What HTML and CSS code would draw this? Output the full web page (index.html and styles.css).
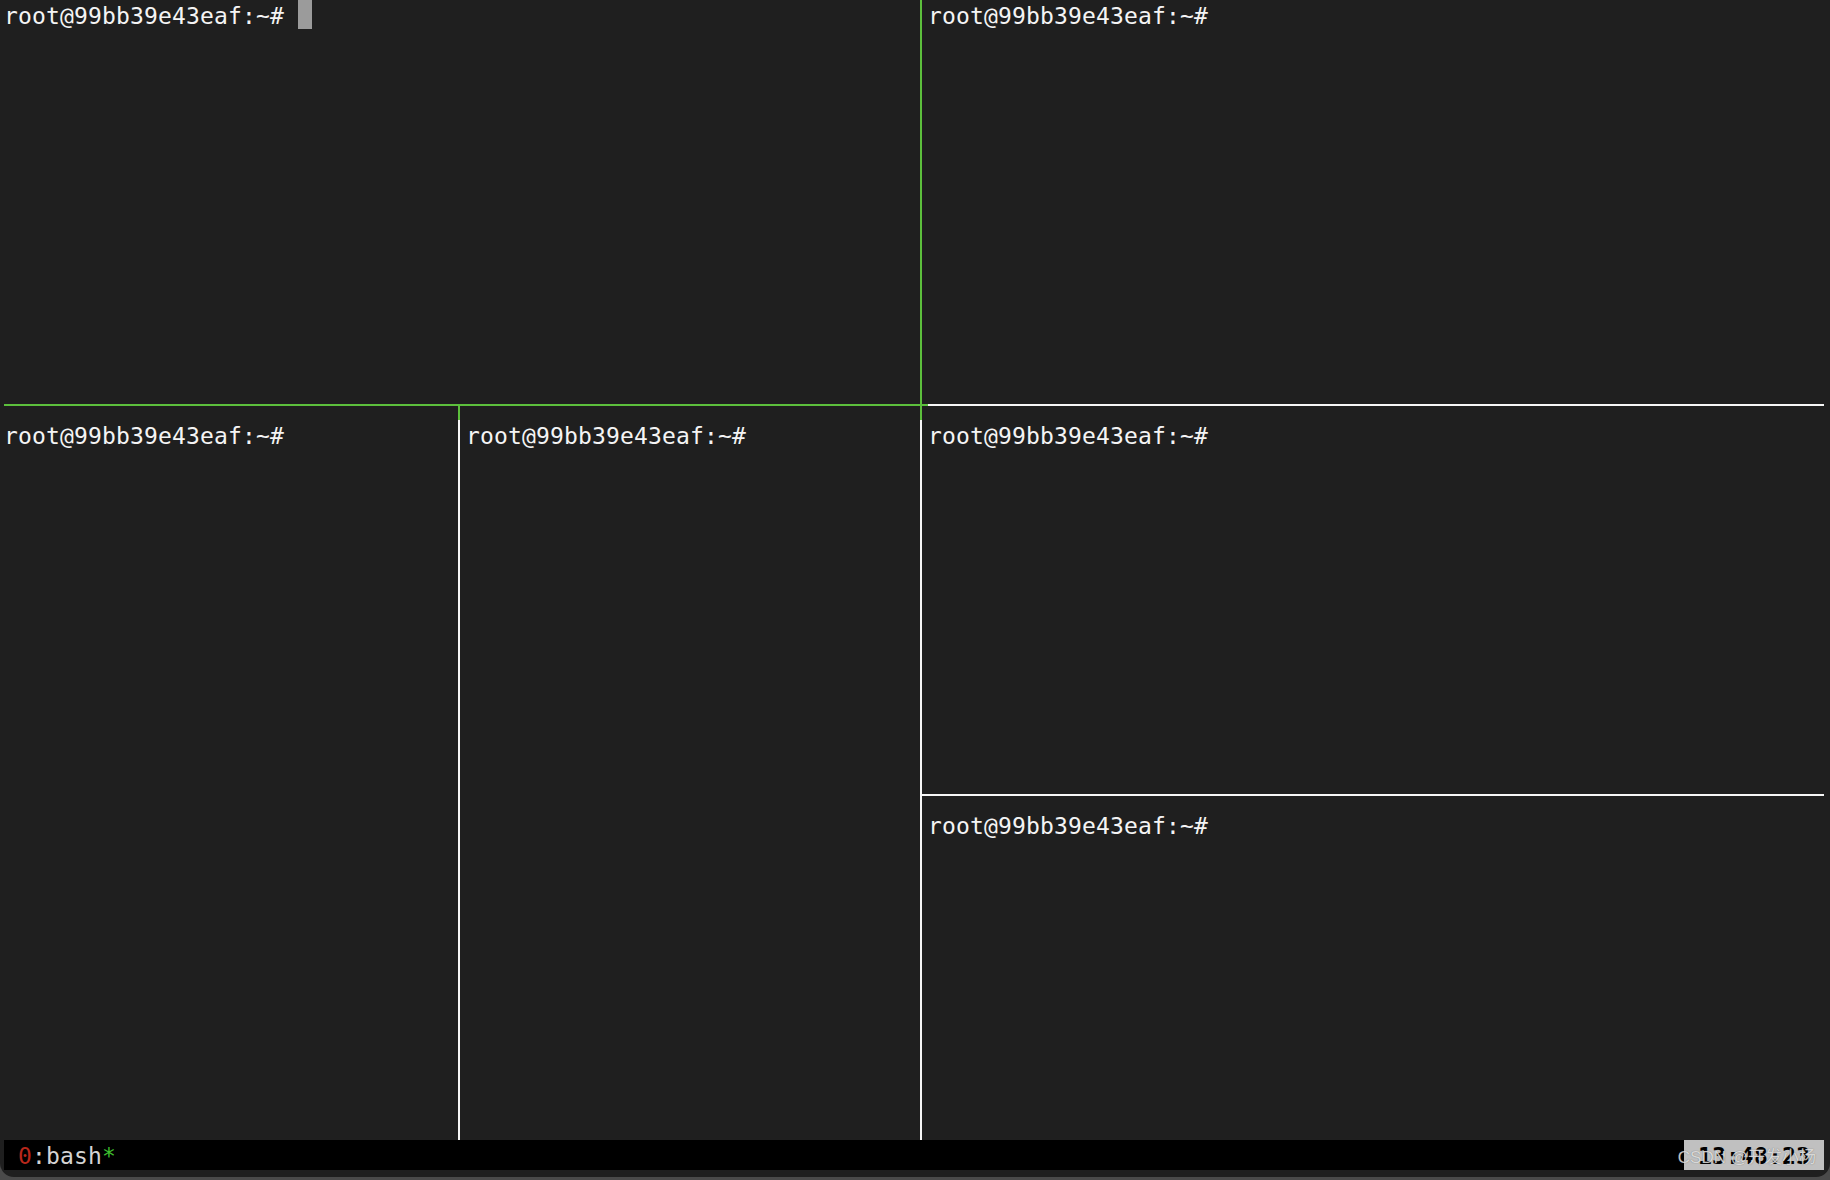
FILE: index.html
```html
<!DOCTYPE html>
<html>
<head>
<meta charset="utf-8">
<link rel="stylesheet" href="styles.css">
</head>
<body>
<div class="window">
  <div class="term">
    <div class="panes">
      <div class="pane p-tl"><span class="prompt">root@99bb39e43eaf:~# </span><span class="cursor"></span></div>
      <div class="bd v green d-r1"></div>
      <div class="pane p-tr"><span class="prompt">root@99bb39e43eaf:~#</span></div>

      <div class="bd h green a-r2"></div>
      <div class="bd tee-down green b-r2"></div>
      <div class="bd h green c-r2"></div>
      <div class="bd cross green d-r2"></div>
      <div class="bd h white e-r2"></div>

      <div class="pane p-bl"><span class="prompt">root@99bb39e43eaf:~#</span></div>
      <div class="bd v white b-r3"></div>
      <div class="pane p-bm"><span class="prompt">root@99bb39e43eaf:~#</span></div>
      <div class="bd v white d-r3"></div>
      <div class="pane p-rm"><span class="prompt">root@99bb39e43eaf:~#</span></div>
      <div class="bd tee-right white d-r4"></div>
      <div class="bd h white e-r4"></div>
      <div class="bd v white d-r5"></div>
      <div class="pane p-rb"><span class="prompt">root@99bb39e43eaf:~#</span></div>
    </div>
    <div class="status">
      <div class="status-left"> <span class="idx">0</span>:bash<span class="flag">*</span></div>
      <div class="status-right">13:48:23</div>
      <div class="watermark">CSDN @开发小杨</div>
    </div>
  </div>
</div>
</body>
</html>
```

FILE: styles.css
```css
html, body {
  margin: 0;
  padding: 0;
}
body {
  background: #4a4a4a;
  width: 1830px;
  height: 1180px;
  overflow: hidden;
}
.window {
  width: 1830px;
  height: 1177px;
  background: #1f1f1f;
  border-radius: 0 0 14px 14px;
}
.term {
  padding-left: 4px;
  width: 1820px;
  font-family: "DejaVu Sans Mono", "Liberation Mono", monospace;
  font-size: 23px;
  letter-spacing: 0.15px;
  line-height: 30px;
  color: #f4f4f4;
}
.panes {
  display: grid;
  grid-template-columns: 448px 14px 448px 14px 896px;
  grid-template-rows: 390px 30px 360px 30px 330px;
  width: 1820px;
  height: 1140px;
}
.pane {
  white-space: pre;
  overflow: hidden;
}
.prompt {
  display: inline-block;
  vertical-align: top;
  padding-top: 1px;
  height: 29px;
}
.cursor {
  display: inline-block;
  vertical-align: top;
  width: 14px;
  height: 29px;
  background: #9b9b9b;
}
.p-tl { grid-column: 1 / 4; grid-row: 1; }
.p-tr { grid-column: 5; grid-row: 1; }
.p-bl { grid-column: 1; grid-row: 3 / 6; }
.p-bm { grid-column: 3; grid-row: 3 / 6; }
.p-rm { grid-column: 5; grid-row: 3; }
.p-rb { grid-column: 5; grid-row: 5; }

.d-r1 { grid-column: 4; grid-row: 1; }
.a-r2 { grid-column: 1; grid-row: 2; }
.b-r2 { grid-column: 2; grid-row: 2; }
.c-r2 { grid-column: 3; grid-row: 2; }
.d-r2 { grid-column: 4; grid-row: 2; }
.e-r2 { grid-column: 5; grid-row: 2; }
.b-r3 { grid-column: 2; grid-row: 3 / 6; }
.d-r3 { grid-column: 4; grid-row: 3; }
.d-r4 { grid-column: 4; grid-row: 4; }
.e-r4 { grid-column: 5; grid-row: 4; }
.d-r5 { grid-column: 4; grid-row: 5; }

.bd { --c: #ffffff; }
.bd.green { --c: #5cbf3c; }
.bd.white { --c: #f6f6f6; }

.bd.v {
  background: linear-gradient(var(--c), var(--c)) no-repeat 6px 0 / 2px 100%;
}
.bd.h {
  background: linear-gradient(var(--c), var(--c)) no-repeat 0 14px / 100% 2px;
}
.bd.cross {
  background:
    linear-gradient(var(--c), var(--c)) no-repeat 6px 0 / 2px 100%,
    linear-gradient(var(--c), var(--c)) no-repeat 0 14px / 100% 2px;
}
.bd.tee-down {
  background:
    linear-gradient(var(--c), var(--c)) no-repeat 6px 14px / 2px 16px,
    linear-gradient(var(--c), var(--c)) no-repeat 0 14px / 100% 2px;
}
.bd.tee-right {
  background:
    linear-gradient(var(--c), var(--c)) no-repeat 6px 0 / 2px 100%,
    linear-gradient(var(--c), var(--c)) no-repeat 6px 14px / 8px 2px;
}

.status {
  position: relative;
  display: flex;
  justify-content: space-between;
  height: 30px;
  background: #000;
  color: #d4d4d4;
  white-space: pre;
}
.status-left {
  padding-top: 1px;
}
.idx { color: #b8271b; }
.flag { color: #3fbf2e; }
.status-right {
  width: 140px;
  padding-top: 1px;
  box-sizing: border-box;
  padding-left: 14px;
  background: #c0c0c0;
  color: #000;
  font-weight: bold;
}
.watermark {
  position: absolute;
  right: 8px;
  top: 8px;
  font-family: "Liberation Sans", "Noto Sans CJK SC", sans-serif;
  font-size: 17px;
  line-height: 20px;
  letter-spacing: 0;
  color: rgba(250, 250, 250, 0.75);
  text-shadow: 0 0 1px rgba(60, 60, 60, 0.7);
}
```
